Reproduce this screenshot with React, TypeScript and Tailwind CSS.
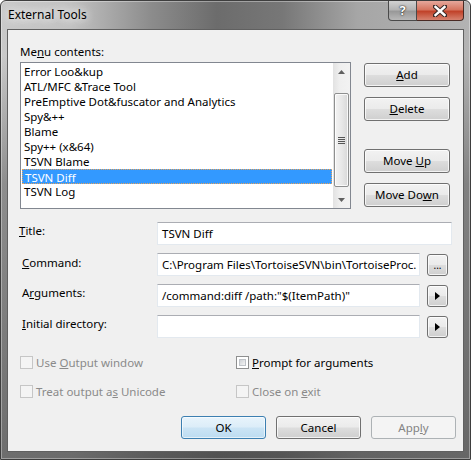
import type { ReactNode } from 'react'

const font = "font-['Segoe_UI','Noto_Sans',sans-serif] text-[11.5px]"

const menuItems = [
  'Error Loo&kup',
  'ATL/MFC &Trace Tool',
  'PreEmptive Dot&fuscator and Analytics',
  'Spy&++',
  'Blame',
  'Spy++ (x&64)',
  'TSVN Blame',
  'TSVN Diff',
  'TSVN Log',
]

function Btn({
  children,
  className = '',
  variant = 'normal',
}: {
  children: ReactNode
  className?: string
  variant?: 'normal' | 'default' | 'disabled'
}) {
  const look = {
    normal:
      'border-[#707070] bg-[linear-gradient(#f2f2f2_0%,#ebebeb_48%,#dddddd_52%,#cfcfcf_100%)] text-black shadow-[inset_0_0_0_1px_rgba(255,255,255,0.75)]',
    default:
      'border-[#3c7fb1] bg-[linear-gradient(#e8f4fc_0%,#dcedf8_48%,#cbe4f5_52%,#bcdcf1_100%)] text-black shadow-[inset_0_0_0_1px_rgba(255,255,255,0.6)]',
    disabled: 'border-[#adb2b5] bg-[#f4f4f4] text-[#838383]',
  }[variant]
  return (
    <div className={`flex items-center justify-center rounded-[3px] border leading-none ${look} ${className}`}>
      <span className="flex items-center">
        <span>{children}</span>
      </span>
    </div>
  )
}

function Arrow() {
  return (
    <svg width="5" height="8" viewBox="0 0 5 8" className="block">
      <path d="M0 0 L5 4 L0 8 Z" fill="#000" />
    </svg>
  )
}

function Check({ label, disabled = false }: { label: ReactNode; disabled?: boolean }) {
  return (
    <div className="flex items-center gap-[3px]">
      <div
        className={`h-[13px] w-[13px] border p-[2px] ${
          disabled ? 'border-[#c6c6c6] bg-[#f4f4f4]' : 'border-[#8e8f8f] bg-white'
        }`}
      >
        {!disabled && (
          <div className="h-full w-full border border-[#bfc3c8] bg-[linear-gradient(135deg,#cfd2d6,#f4f4f4)]" />
        )}
      </div>
      <span className={`leading-[15px] ${disabled ? 'text-[#8a8a8a]' : 'text-black'}`}>{label}</span>
    </div>
  )
}

function Scrollbar() {
  return (
    <div className="flex w-[17px] flex-col bg-[linear-gradient(90deg,#e2e2e2,#efefef_40%,#f2f2f2)]">
      <div className="flex h-[17px] items-center justify-center">
        <svg width="7" height="4" viewBox="0 0 7 4">
          <path d="M0 4 L3.5 0 L7 4 Z" fill="#606060" />
        </svg>
      </div>
      <div className="mx-[1px] mt-[13px] flex h-[94px] items-center justify-center rounded-[2px] border border-[#8e8f8f] bg-[linear-gradient(90deg,#f3f3f3,#e8e8e8_50%,#d8d8d8)] shadow-[inset_0_0_0_1px_rgba(255,255,255,0.8)]">
        <div className="flex flex-col gap-[1px]">
          <div className="h-[1px] w-[7px] bg-[#555]" />
          <div className="h-[1px] w-[7px] bg-[#555]" />
          <div className="h-[1px] w-[7px] bg-[#555]" />
          <div className="h-[1px] w-[7px] bg-[#555]" />
        </div>
      </div>
      <div className="mt-auto flex h-[17px] items-center justify-center">
        <svg width="7" height="4" viewBox="0 0 7 4">
          <path d="M0 0 L3.5 4 L7 0 Z" fill="#606060" />
        </svg>
      </div>
    </div>
  )
}

function Input({ value = '', className = '' }: { value?: string; className?: string }) {
  return (
    <div
      className={`h-[23px] overflow-hidden whitespace-nowrap border border-[#e3e9ef] border-t-[#abadb3] bg-white pl-[4px] leading-[21px] ${className}`}
    >
      {value}
    </div>
  )
}

export default function App() {
  return (
    <div className={`${font} flex h-[460px] w-[471px] flex-col overflow-hidden rounded-t-[6px] border border-[#3e3e3e] bg-[linear-gradient(180deg,rgba(70,70,70,0)_0%,rgba(70,70,70,0)_12%,rgba(70,70,70,0.45)_40%,rgba(70,70,70,0.7)_100%),linear-gradient(90deg,#c9c9c9_0%,#c2c2c2_15%,#8c8c8c_32%,#6c6c6c_46%,#777777_60%,#a6a6a6_76%,#b3b3b3_100%)] shadow-[inset_0_0_0_1px_rgba(255,255,255,0.35)]`}>
      {/* title bar */}
      <div className="flex h-[28px] items-start">
        <div className="pl-[7px] pt-[6px] text-[12px] leading-[15px] text-black [text-shadow:0_0_8px_#fff,0_0_12px_#fff]">
          External Tools
        </div>
        <div className="ml-auto mr-[6px] flex">
          <div className="flex h-[20px] w-[29px] items-center justify-center rounded-bl-[4px] border border-t-0 border-[#4a4a4a] bg-[linear-gradient(#d2d2d2_0%,#b4b4b4_45%,#999999_55%,#b8b8b8_100%)] text-[13px] font-bold text-white [text-shadow:0_0_1px_#000,0_0_2px_#333]">
            ?
          </div>
          <div className="flex h-[20px] w-[47px] items-center justify-center rounded-br-[4px] border border-l-0 border-t-0 border-[#4a2a24] bg-[linear-gradient(#e6a89c_0%,#d67560_45%,#c1432a_55%,#d6826f_100%)]">
            <svg width="14" height="12" viewBox="0 0 14 12">
              <path d="M2 1.5 L12 10.5 M12 1.5 L2 10.5" stroke="#3a2a28" strokeWidth="4.4" strokeLinecap="square" />
              <path d="M2.5 2 L11.5 10 M11.5 2 L2.5 10" stroke="#fff" strokeWidth="2.4" strokeLinecap="square" />
            </svg>
          </div>
        </div>
      </div>

      {/* client area */}
      <div className="mx-[6px] flex h-[423px] flex-col border border-[#606060] bg-[#f0f0f0] text-black">
        <div className="ml-[12px] mt-[14px] leading-[15px]">
          Me<u>n</u>u contents:
        </div>

        <div className="ml-[12px] mt-[3px] flex items-start">
          <div className="flex h-[147px] w-[331px] border border-[#828790] bg-white">
            <div className="flex-1 pt-[1px]">
              {menuItems.map((item, i) => (
                <div
                  key={i}
                  className={`mx-[1px] h-[15px] whitespace-nowrap pl-[2px] leading-[15px] ${
                    item === 'TSVN Diff'
                      ? 'border border-dotted border-[#e8a35a] bg-[#3399ff] pl-[1px] leading-[13px] text-white'
                      : ''
                  }`}
                >
                  {item}
                </div>
              ))}
            </div>
            <Scrollbar />
          </div>

          <div className="ml-[13px] mt-[1px] flex w-[86px] flex-col">
            <Btn className="h-[24px]">
              <u>A</u>dd
            </Btn>
            <Btn className="mt-[10px] h-[24px]">
              <u>D</u>elete
            </Btn>
            <Btn className="mt-[28px] h-[24px]">
              Move <u>U</u>p
            </Btn>
            <Btn className="mt-[10px] h-[24px]">
              Move Do<u>w</u>n
            </Btn>
          </div>
        </div>

        {/* form rows */}
        <div className="mt-[13px] flex items-start pl-[11px]">
          <div className="w-[138px] pt-[1px] leading-[15px]">
            <u>T</u>itle:
          </div>
          <Input value="TSVN Diff" className="w-[295px]" />
        </div>
        <div className="mt-[8px] flex items-start pl-[14px]">
          <div className="w-[135px] pt-[2px] leading-[15px]">
            <u>C</u>ommand:
          </div>
          <Input value="C:\Program Files\TortoiseSVN\bin\TortoiseProc." className="w-[263px]" />
          <Btn className="ml-[7px] mt-[1px] h-[22px] w-[21px] items-end pb-[5px] text-[10px]">...</Btn>
        </div>
        <div className="mt-[8px] flex items-start pl-[14px]">
          <div className="w-[135px] pt-[1px] leading-[15px]">
            A<u>r</u>guments:
          </div>
          <Input value={'/command:diff /path:"$(ItemPath)"'} className="w-[263px]" />
          <Btn className="ml-[7px] mt-[1px] h-[22px] w-[21px]">
            <Arrow />
          </Btn>
        </div>
        <div className="mt-[8px] flex items-start pl-[14px]">
          <div className="w-[135px] pt-[1px] leading-[15px]">
            <u>I</u>nitial directory:
          </div>
          <Input className="w-[263px]" />
          <Btn className="ml-[7px] mt-[1px] h-[22px] w-[21px]">
            <Arrow />
          </Btn>
        </div>

        {/* checkboxes */}
        <div className="mt-[17px] flex pl-[12px]">
          <div className="w-[216px]">
            <Check disabled label={<>Use <u>O</u>utput window</>} />
          </div>
          <Check label={<><u>P</u>rompt for arguments</>} />
        </div>
        <div className="mt-[14px] flex pl-[12px]">
          <div className="w-[216px]">
            <Check disabled label={<>Treat output a<u>s</u> Unicode</>} />
          </div>
          <Check disabled label={<>Close on <u>e</u>xit</>} />
        </div>

        {/* dialog buttons */}
        <div className="mr-[7px] mt-[17px] flex justify-end gap-[10px]">
          <Btn variant="default" className="h-[23px] w-[85px]">
            OK
          </Btn>
          <Btn className="h-[23px] w-[85px]">Cancel</Btn>
          <Btn variant="disabled" className="h-[23px] w-[85px]">
            App<u>l</u>y
          </Btn>
        </div>
      </div>
    </div>
  )
}
